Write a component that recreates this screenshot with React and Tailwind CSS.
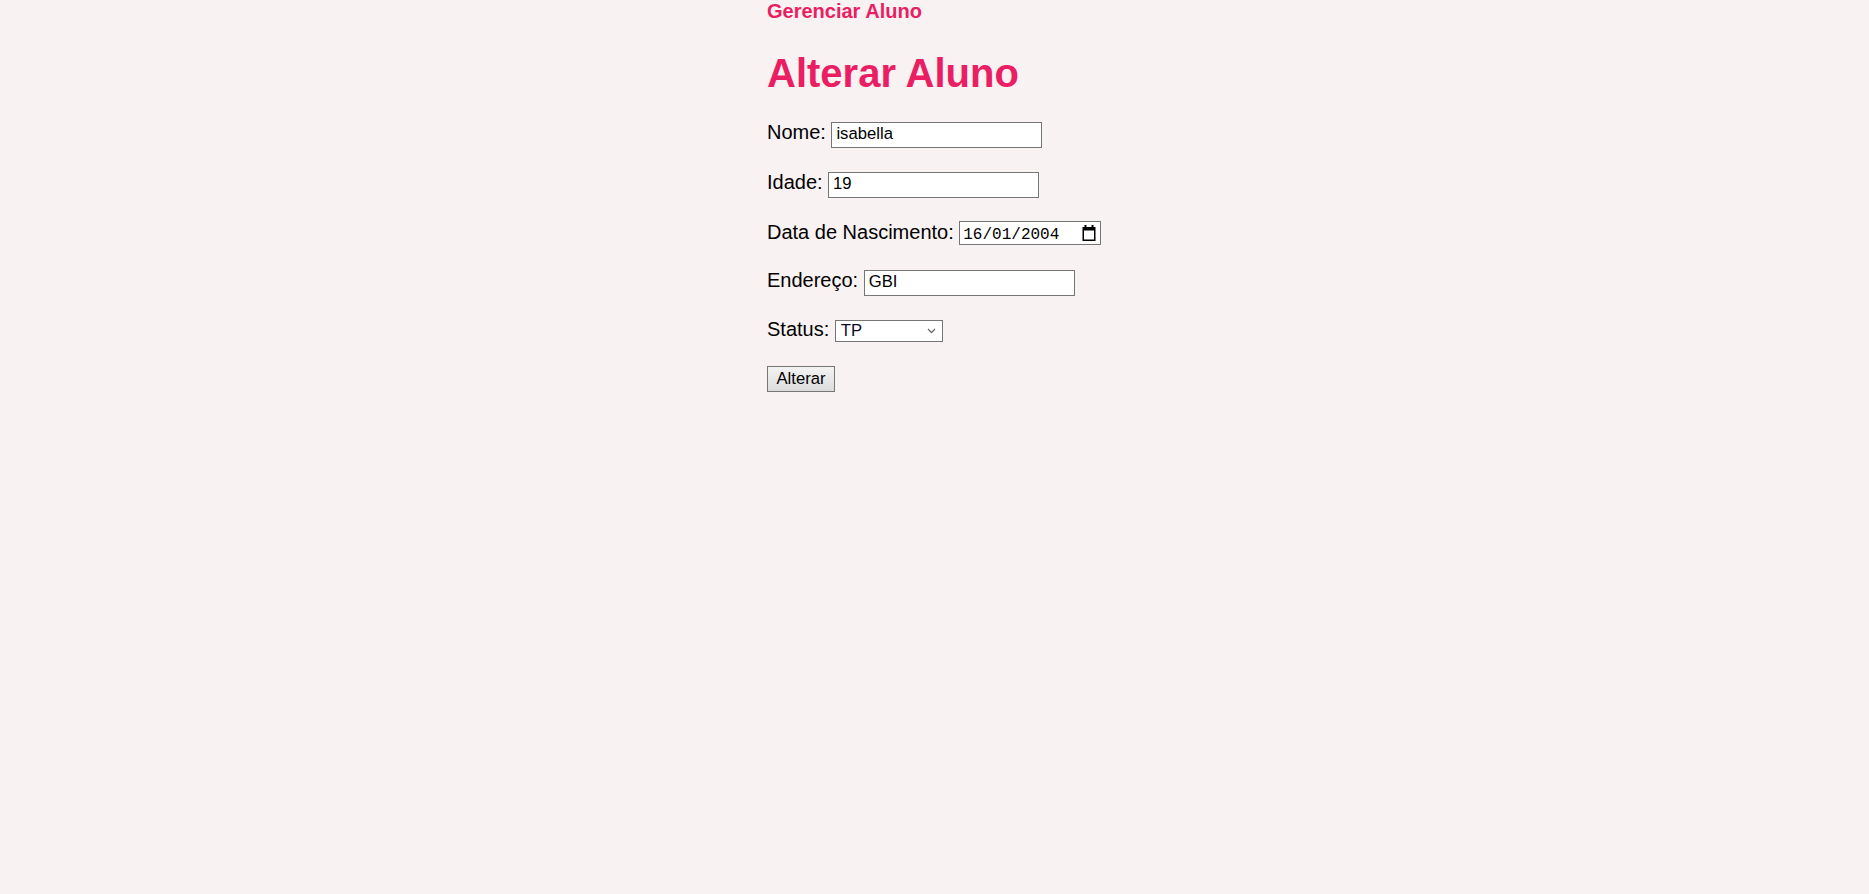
import React from "react";

const font = { fontFamily: '"Liberation Sans", Arial, sans-serif' };

function CalendarIcon() {
  return (
    <svg width="14" height="16" viewBox="0 0 14 16" className="shrink-0">
      <rect x="2.5" y="0" width="2" height="3" fill="#000" />
      <rect x="9.5" y="0" width="2" height="3" fill="#000" />
      <path
        fillRule="evenodd"
        fill="#000"
        d="M0.5 2h13v14h-13z M2 5.5h10v9H2z"
      />
    </svg>
  );
}

function Row({ label, height, children }) {
  return (
    <div className={`flex items-baseline ${height}`}>
      <span className="text-[20px] leading-[23px] text-black">{label}</span>
      <span className="w-[5.5px]" />
      {children}
    </div>
  );
}

const inputCls =
  "h-[26px] w-[211px] border border-[#767676] bg-white px-[4px] pb-[2px] text-[16.67px] text-black outline-none";

function App() {
  return (
    <div className="min-h-screen w-full bg-[#f8f2f2]" style={font}>
      <div className="ml-[767px]">
        <div className="h-[23px] text-[20px] font-bold leading-[23px] text-[#e91e63]">
          Gerenciar Aluno
        </div>
        <h1 className="mt-[27px] text-[40px] font-bold leading-[46px] text-[#e91e63]">
          Alterar Aluno
        </h1>

        <form className="mt-[25px]" onSubmit={(e) => e.preventDefault()}>
          <Row label="Nome:" height="h-[50px]">
            <input className={inputCls} style={font} defaultValue="isabella" />
          </Row>
          <Row label="Idade:" height="h-[50px]">
            <input className={inputCls} style={font} defaultValue="19" />
          </Row>
          <Row label="Data de Nascimento:" height="h-[48px]">
            <div className="flex h-[24px] w-[142px] items-center justify-between border border-[#767676] bg-white pl-[3px] pr-[4px]">
              <span
                className="pt-[4px] text-[16px] leading-[22px] text-black"
                style={{ fontFamily: '"Liberation Mono", "DejaVu Sans Mono", monospace' }}
              >
                16/01/2004
              </span>
              <CalendarIcon />
            </div>
          </Row>
          <Row label="Endereço:" height="h-[49px]">
            <input className={inputCls} style={font} defaultValue="GBI" />
          </Row>
          <Row label="Status:" height="h-[48px]">
            <div className="flex h-[22px] w-[108px] items-center justify-between border border-[#767676] bg-white pl-[5px] pr-[6px]">
              <span className="text-[16.67px] leading-[20px] text-[#0a0a1e]">TP</span>
              <svg width="9" height="6" viewBox="0 0 9 6">
                <path d="M1 1l3.5 3.5L8 1" fill="none" stroke="#6d6d6d" strokeWidth="1.3" />
              </svg>
            </div>
          </Row>
          <button
            type="submit"
            className="h-[26px] w-[68px] border border-[#767676] bg-gradient-to-b from-[#f3f3f3] to-[#dcdcdc] text-[16.67px] leading-[20px] text-black"
            style={font}
          >
            Alterar
          </button>
        </form>
      </div>
    </div>
  );
}

export default App;
